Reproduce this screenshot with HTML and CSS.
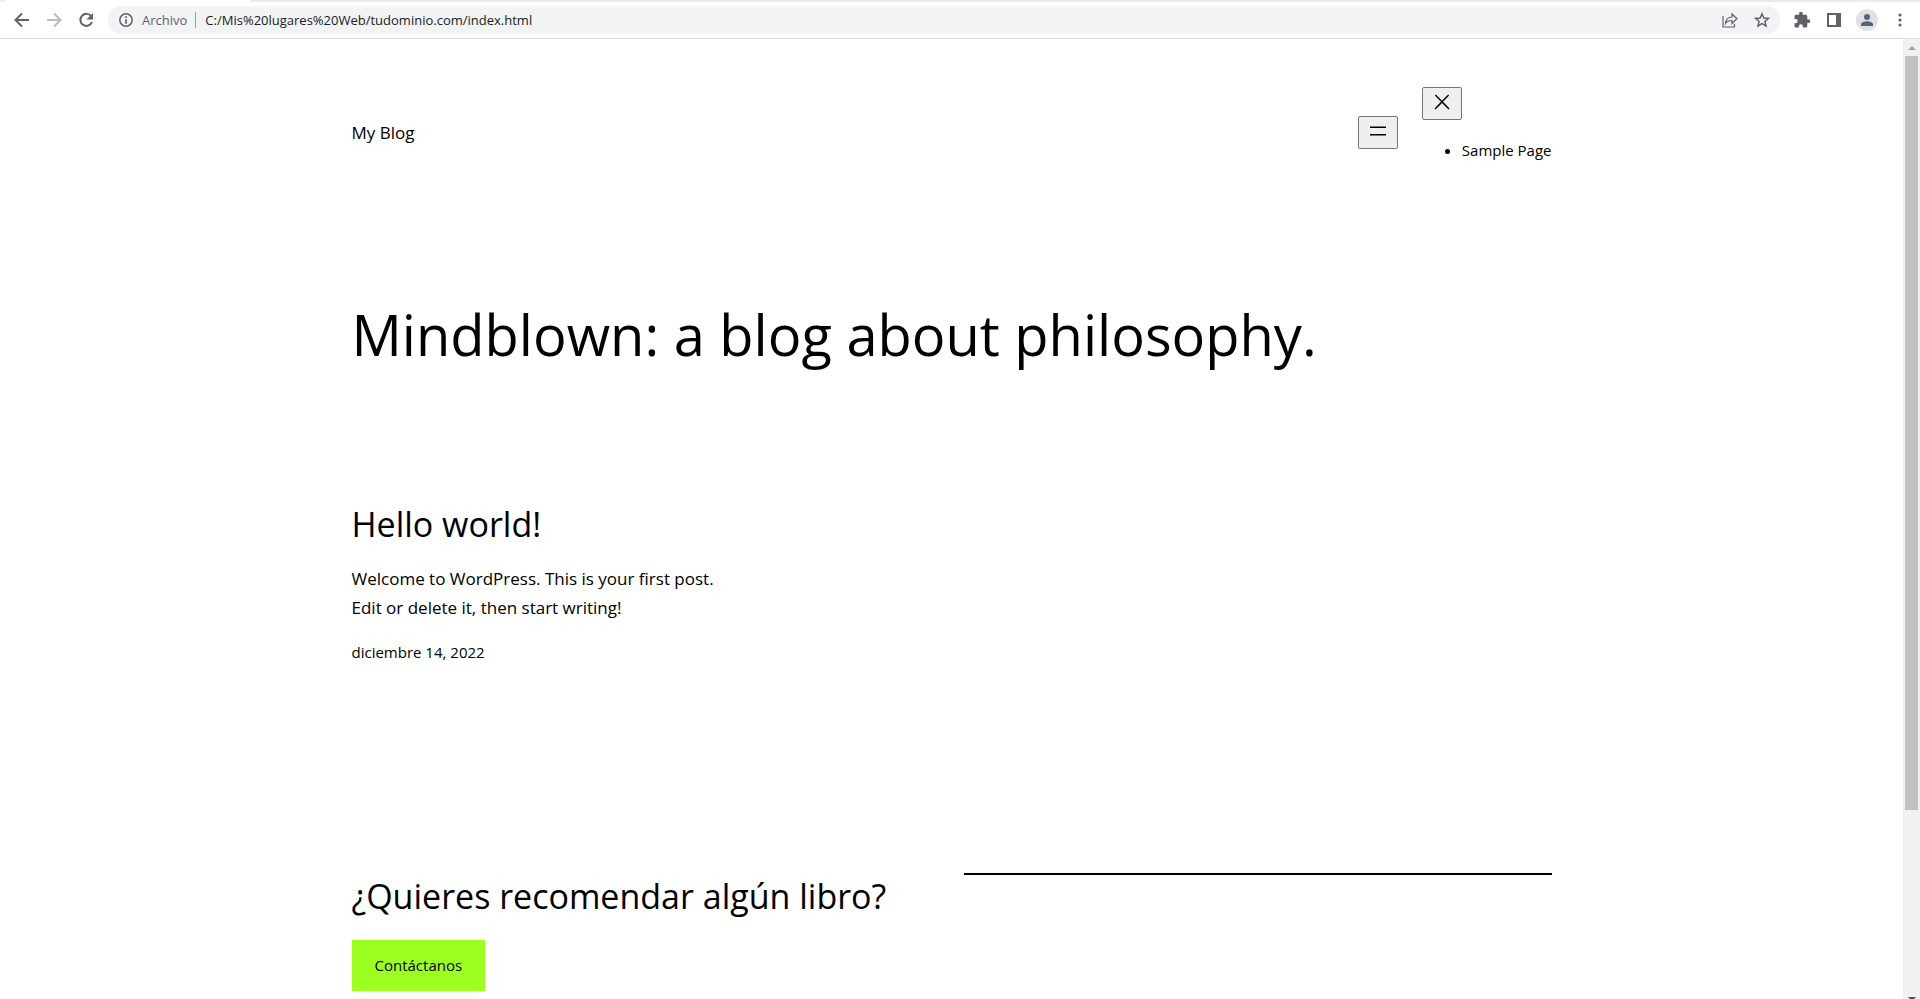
FILE: index.html
```
<!DOCTYPE html>
<html lang="es">
<head>
    <meta charset="UTF-8">
    <meta name="viewport" content="width=device-width, initial-scale=1.0">
    <title>My Blog</title>
    <link rel="stylesheet" href="styles.css">
</head>
<body>
    <div class="tab-strip"><span class="tab-left"></span><span class="tab-active"></span><span class="tab-right"></span></div>
    <div class="toolbar">
        <button class="tool" aria-label="Atrás">
            <svg width="20" height="20" viewBox="0 0 20 20" fill="none" stroke="#5f6368" stroke-width="2"><path d="M17 10H4M10 3.500L3.500 10l6.500 6.500"/></svg>
        </button>
        <button class="tool" aria-label="Adelante">
            <svg width="20" height="20" viewBox="0 0 20 20" fill="none" stroke="#babcbe" stroke-width="2"><path d="M3 10h13M10 3.500L16.500 10L10 16.500"/></svg>
        </button>
        <button class="tool" aria-label="Recargar">
            <svg width="20" height="20" viewBox="0 0 20 20"><path d="M15.300 6.400A6 6 0 1 0 16 12" fill="none" stroke="#5f6368" stroke-width="2"/><path d="M17 3v6.500h-6.500z" fill="#5f6368"/></svg>
        </button>
        <div class="omnibox">
            <svg width="16" height="16" viewBox="0 0 16 16"><circle cx="8" cy="8" r="6.200" fill="none" stroke="#5f6368" stroke-width="1.500"/><path d="M7.200 4.300h1.700v1.700H7.200zM7.200 7.200h1.700v4.500H7.200z" fill="#5f6368"/></svg>
            <span class="scheme">Archivo</span>
            <input class="url" type="text" aria-label="Dirección" value="C:/Mis%20lugares%20Web/tudominio.com/index.html">
            <button class="tool" aria-label="Compartir">
                <svg width="18" height="18" viewBox="0 0 18 18" fill="none" stroke="#5f6368" stroke-width="1.200"><path d="M2 5v11h11.500v-3M4.500 12.500c.3-4.200 2.500-6.300 6.500-6.500V3l5 4.800-5 4.700V9.500c-3 0-5 .7-6.500 3z"/></svg>
            </button>
            <button class="tool" aria-label="Añadir a marcadores">
                <svg width="18" height="18" viewBox="0 0 18 18" fill="none" stroke="#5f6368" stroke-width="1.500"><path d="M9 2.800l1.800 4.200 4.600.4-3.500 3 1.100 4.500-4-2.400-4 2.400 1.100-4.500-3.500-3 4.600-.4z"/></svg>
            </button>
        </div>
        <button class="tool" aria-label="Extensiones">
            <svg width="18" height="18" viewBox="0 0 24 24" fill="#5f6368"><path d="M20.500 11H19V7c0-1.100-.9-2-2-2h-4V3.500a2.500 2.500 0 0 0-5 0V5H4c-1.100 0-2 .9-2 2v3.800h1.500a2.700 2.700 0 0 1 0 5.400H2V20c0 1.100.9 2 2 2h3.800v-1.500a2.700 2.700 0 0 1 5.400 0V22H17c1.100 0 2-.9 2-2v-4h1.500a2.500 2.500 0 0 0 0-5z"/></svg>
        </button>
        <button class="tool" aria-label="Panel lateral">
            <svg width="14" height="14" viewBox="0 0 14 14"><path d="M0 0h14v14H0z" fill="#5f6368"/><path d="M2 2h7v10H2z" fill="#fff"/></svg>
        </button>
        <button class="tool" aria-label="Perfil">
            <svg width="22" height="22" viewBox="0 0 22 22"><circle cx="11" cy="11" r="11" fill="#dee1e6"/><g fill="#56637a"><circle cx="11" cy="8" r="3"/><path d="M5 17v-1.500c0-2 3.500-3.200 6-3.200s6 1.200 6 3.200V17z"/></g></svg>
        </button>
        <button class="tool" aria-label="Menú">
            <svg width="4" height="14" viewBox="0 0 4 14" fill="#5f6368"><circle cx="2" cy="2" r="1.600"/><circle cx="2" cy="7" r="1.600"/><circle cx="2" cy="12" r="1.600"/></svg>
        </button>
    </div>
    <div class="viewport">
        <div class="page">
            <header class="site-header">
                <a class="site-title" href="#">My Blog</a>
                <nav class="site-nav">
                    <button class="nav-button" aria-label="Abrir menú">
                        <svg width="24" height="24" viewBox="0 0 24 24"><path d="M4 7.500h16V9H4zM4 15h16v1.500H4z"/></svg>
                    </button>
                    <div class="nav-content">
                        <button class="nav-button" aria-label="Cerrar menú">
                            <svg width="24" height="24" viewBox="0 0 24 24"><path d="M13 11.800l6.100-6.300-1-1-6.100 6.200-6.100-6.200-1 1 6.100 6.300-6.500 6.700 1 1 6.500-6.600 6.500 6.600 1-1z"/></svg>
                        </button>
                        <ul>
                            <li><a href="#">Sample Page</a></li>
                        </ul>
                    </div>
                </nav>
            </header>
            <main>
                <h1>Mindblown: a blog about philosophy.</h1>
                <article class="post">
                    <h2><a href="#">Hello world!</a></h2>
                    <p>Welcome to WordPress. This is your first post. Edit or delete it, then start writing!</p>
                    <a class="post-date" href="#"><time datetime="2022-12-14">diciembre 14, 2022</time></a>
                </article>
                <section class="contact">
                    <div>
                        <h2>¿Quieres recomendar algún libro?</h2>
                        <a class="contact-button" href="#">Contáctanos</a>
                    </div>
                    <div><hr></div>
                </section>
            </main>
        </div>
        <div class="scrollbar">
            <span class="arrow-up"></span>
            <span class="thumb"></span>
            <span class="arrow-down"></span>
        </div>
    </div>
</body>
</html>
```
FILE: styles.css
```
* {
    box-sizing: border-box;
}
body {
    margin: 0;
    height: 100vh;
    display: flex;
    flex-direction: column;
    overflow: hidden;
    background-color: #fff;
    color: #000;
    font-family: "Segoe UI", "Open Sans", "Noto Sans", sans-serif;
    font-size: 17px;
    line-height: 29px;
}
a {
    color: inherit;
    text-decoration: none;
}
button {
    padding: 0;
    border: none;
    background: none;
    cursor: pointer;
}
svg {
    display: block;
}

/* browser bar */
.tab-strip {
    display: flex;
    flex: none;
    height: 2px;
    background-color: #e8eaed;
}
.tab-left {
    width: 5px;
}
.tab-active {
    width: 246px;
    background-color: #fff;
}
.tab-right {
    flex: 1;
}
.toolbar {
    display: flex;
    flex: none;
    align-items: center;
    gap: 12px;
    height: 37px;
    padding: 0 10px 0 12px;
    border-bottom: 1px solid #dadce0;
}
.toolbar .tool {
    display: flex;
    align-items: center;
    justify-content: center;
    min-width: 20px;
    height: 22px;
}
.omnibox {
    display: flex;
    flex: 1;
    align-items: center;
    height: 28px;
    padding: 0 8px 0 10px;
    border-radius: 14px;
    background-color: #f1f3f4;
    font-size: 13px;
    line-height: 16px;
}
.omnibox .tool {
    margin-left: 12px;
}
.scheme {
    margin-left: 8px;
    padding-right: 8px;
    border-right: 1px solid #9aa0a6;
    color: #5f6368;
}
.url {
    flex: 1;
    padding: 0 0 0 9px;
    border: none;
    background: none;
    color: #202124;
    font: inherit;
}

/* page */
.viewport {
    display: flex;
    flex: 1;
    min-height: 0;
}
.page {
    flex: 1;
    overflow: hidden;
    padding: 48px 24px 0;
}
.site-header,
main {
    max-width: 1200px;
    margin: 0 auto;
}
.site-header {
    display: flex;
    align-items: center;
    justify-content: space-between;
}
.site-nav {
    display: flex;
    align-items: center;
    gap: 24px;
    font-size: 15px;
    line-height: 26px;
}
.nav-button {
    display: flex;
    align-items: flex-start;
    justify-content: center;
    width: 40px;
    height: 33px;
    padding-top: 2px;
    border: 1px solid #767676;
    border-radius: 2px;
    background-color: #efefef;
}
.nav-content ul {
    margin: 17px 0 15px;
    padding-left: 40px;
}
h1,
h2 {
    margin: 0;
    font-weight: 400;
}
h1 {
    margin-top: 121px;
    font-size: 56px;
    line-height: 70px;
}
h2 {
    font-size: 34px;
    line-height: 46px;
}
.post {
    width: 376px;
    margin-top: 132px;
}
.post p {
    margin: 17px 0;
}
.post-date {
    display: block;
    font-size: 15px;
    line-height: 26px;
}
.contact {
    display: grid;
    grid-template-columns: 1fr 1fr;
    gap: 24px;
    margin-top: 208px;
}
.contact hr {
    margin: 0;
    border: none;
    border-top: 2px solid #000;
}
.contact-button {
    display: inline-block;
    margin-top: 21px;
    padding: 12px 23px;
    background-color: #9dff20;
    font-size: 15px;
    line-height: 27px;
}

/* scrollbar */
.scrollbar {
    display: flex;
    flex: none;
    flex-direction: column;
    align-items: center;
    width: 17px;
    background-color: #f1f1f1;
}
.arrow-up,
.arrow-down {
    border: 4px solid transparent;
}
.arrow-up {
    margin: 3px 0 6px;
    border-bottom-color: #a3a3a3;
}
.thumb {
    width: 13px;
    height: 78.5%;
    background-color: #c1c1c1;
}
.arrow-down {
    margin: auto 0 -6px;
    border-top-color: #505050;
}
```
